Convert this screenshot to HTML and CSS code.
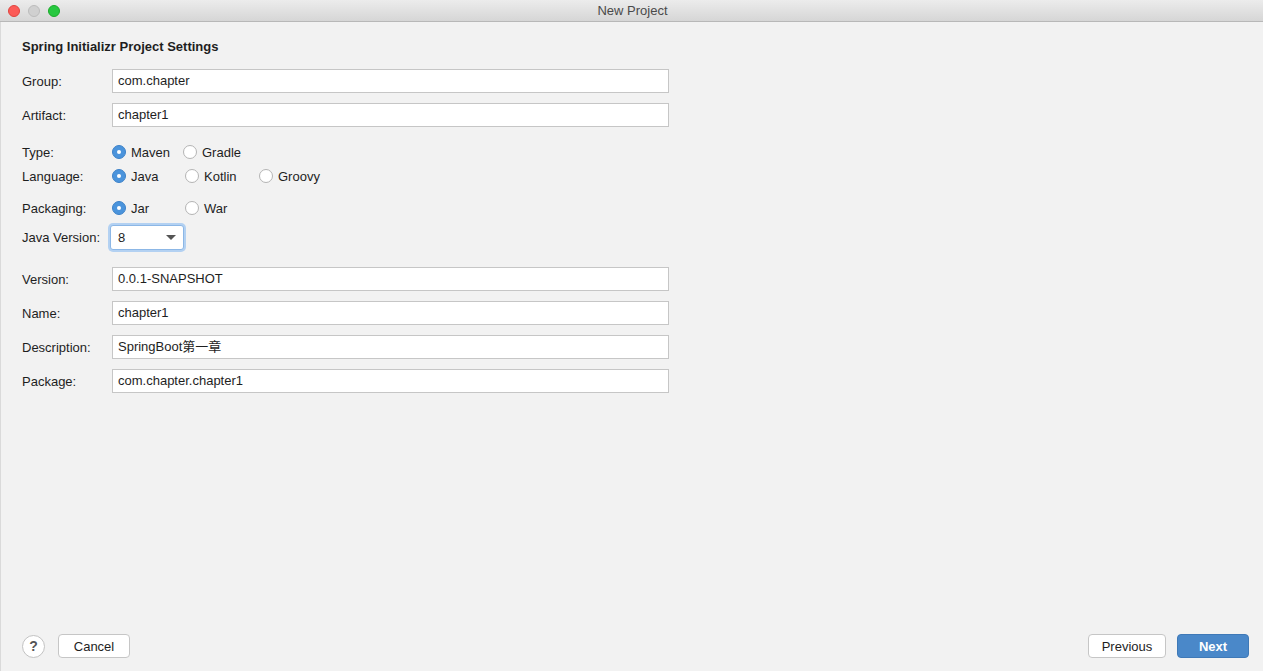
FILE: index.html
```html
<!DOCTYPE html>
<html lang="en">
<head>
    <meta charset="UTF-8">
    <title>New Project</title>
    <link rel="stylesheet" href="styles.css">
</head>
<body>

  <div class="window">

    <div class="titlebar">
      <div class="lights">
        <span class="light red"></span>
        <span class="light gray"></span>
        <span class="light green"></span>
      </div>
      <div class="title">New Project</div>
    </div>

    <div class="content">
      <h1>Spring Initializr Project Settings</h1>

      <div class="row row-group">
        <label>Group:</label>
        <div class="field">com.chapter</div>
      </div>
      <div class="row row-next">
        <label>Artifact:</label>
        <div class="field">chapter1</div>
      </div>

      <div class="row row-radio row-type">
        <label>Type:</label>
        <div class="options">
          <span class="option w71"><span class="radio on"></span>Maven</span>
          <span class="option"><span class="radio"></span>Gradle</span>
        </div>
      </div>
      <div class="row row-radio row-lang">
        <label>Language:</label>
        <div class="options">
          <span class="option w73"><span class="radio on"></span>Java</span>
          <span class="option w74"><span class="radio"></span>Kotlin</span>
          <span class="option"><span class="radio"></span>Groovy</span>
        </div>
      </div>
      <div class="row row-radio row-pack">
        <label>Packaging:</label>
        <div class="options">
          <span class="option w73"><span class="radio on"></span>Jar</span>
          <span class="option"><span class="radio"></span>War</span>
        </div>
      </div>
      <div class="row row-java">
        <label>Java Version:</label>
        <div class="combo">
          <span>8</span>
          <span class="arrow"></span>
        </div>
      </div>

      <div class="row row-version">
        <label>Version:</label>
        <div class="field">0.0.1-SNAPSHOT</div>
      </div>
      <div class="row row-next">
        <label>Name:</label>
        <div class="field">chapter1</div>
      </div>
      <div class="row row-next">
        <label>Description:</label>
        <div class="field">SpringBoot第一章</div>
      </div>
      <div class="row row-next">
        <label>Package:</label>
        <div class="field">com.chapter.chapter1</div>
      </div>
    </div>

    <div class="footer">
      <div class="footer-left">
        <button class="help">?</button>
        <button class="btn">Cancel</button>
      </div>
      <div class="footer-right">
        <button class="btn btn-prev">Previous</button>
        <button class="btn btn-primary">Next</button>
      </div>
    </div>

  </div>

</body>
</html>
```

FILE: styles.css
```css
html {
  box-sizing: border-box;
}

*, *:before, *:after {
  box-sizing: inherit;
}

body {
  margin: 0;
  font-family: "Liberation Sans", Arial, "Noto Sans CJK SC", sans-serif;
  font-size: 13px;
  color: #1e1e1e;
  background: #f2f2f2;
}

.window {
  height: 671px;
  display: flex;
  flex-direction: column;
  background: #f2f2f2;
  box-shadow: inset 1px 0 0 #dadada;
}

/* title bar */
.titlebar {
  height: 22px;
  position: relative;
  background: linear-gradient(#ececec, #d6d6d6);
  border-bottom: 1px solid #b8b8b8;
  display: flex;
  align-items: center;
  justify-content: center;
}

.lights {
  position: absolute;
  left: 8px;
  top: 5px;
  display: flex;
  gap: 8px;
}

.light {
  width: 12px;
  height: 12px;
  border-radius: 50%;
  display: block;
}

.red {
  background: #fc5b57;
  border: 1px solid #e0443e;
}

.gray {
  background: #d0d0d0;
  border: 1px solid #bcbcbc;
}

.green {
  background: #27c840;
  border: 1px solid #1aab29;
}

.title {
  color: #4a4a4a;
  font-size: 13px;
  padding-left: 2px;
}

/* form */
.content {
  flex: 1;
  padding: 17px 0 0 22px;
}

h1 {
  margin: 0;
  font-size: 13px;
  font-weight: bold;
  line-height: 16px;
}

.row {
  display: flex;
  align-items: center;
}

.row label {
  width: 90px;
  flex: none;
}

.field {
  width: 557px;
  height: 24px;
  background: #fff;
  border: 1px solid #c6c6c6;
  padding: 0 5px;
  line-height: 22px;
}

.row-group {
  margin-top: 14px;
}

.row-next {
  margin-top: 10px;
}

.row-radio {
  height: 20px;
}

.row-type {
  margin-top: 15px;
}

.row-lang {
  margin-top: 4px;
}

.row-pack {
  margin-top: 12px;
}

.row-java {
  margin-top: 7px;
}

.row-version {
  margin-top: 17px;
}

.options {
  display: flex;
  margin-left: -1px;
}

.option {
  display: flex;
  align-items: center;
  gap: 5px;
}

.w71 { width: 71px; }
.w73 { width: 73px; }
.w74 { width: 74px; }

.radio {
  width: 14px;
  height: 14px;
  border-radius: 50%;
  background: #fff;
  border: 1px solid #b4b4b4;
  display: block;
  margin-left: 1px;
}

.radio.on {
  background: #4b94dc;
  border-color: #3d82c8;
  position: relative;
}

.radio.on:after {
  content: "";
  position: absolute;
  width: 4px;
  height: 4px;
  border-radius: 50%;
  background: #fff;
  left: 4px;
  top: 4px;
}

.combo {
  width: 74px;
  height: 25px;
  margin-left: -2px;
  background: #fff;
  border: 1px solid #8cb7e6;
  box-shadow: 0 0 0 2px #b3d1f2;
  border-radius: 3px;
  display: flex;
  align-items: center;
  justify-content: space-between;
  padding: 0 7px 0 7px;
}

.arrow {
  width: 0;
  height: 0;
  border-left: 5px solid transparent;
  border-right: 5px solid transparent;
  border-top: 5px solid #555;
}

/* footer */
.footer {
  display: flex;
  justify-content: space-between;
  align-items: center;
  padding: 0 14px 13px 22px;
}

.footer-left,
.footer-right {
  display: flex;
  align-items: center;
  gap: 11px;
}

.footer-left {
  gap: 13px;
}

button {
  font-family: inherit;
  font-size: 13px;
  cursor: pointer;
}

.help {
  width: 23px;
  height: 23px;
  border-radius: 50%;
  background: #fff;
  border: 1px solid #c2c2c2;
  color: #555;
  font-weight: bold;
  font-size: 14px;
  padding: 0;
}

.btn {
  height: 24px;
  background: #fff;
  border: 1px solid #c6c6c6;
  border-radius: 4px;
  color: #1e1e1e;
  padding: 0;
  width: 72px;
}

.btn-prev {
  width: 78px;
}

.btn-primary {
  width: 72px;
  background: #4a88c9;
  border-color: #3f79b7;
  color: #fff;
  font-weight: bold;
}
```
